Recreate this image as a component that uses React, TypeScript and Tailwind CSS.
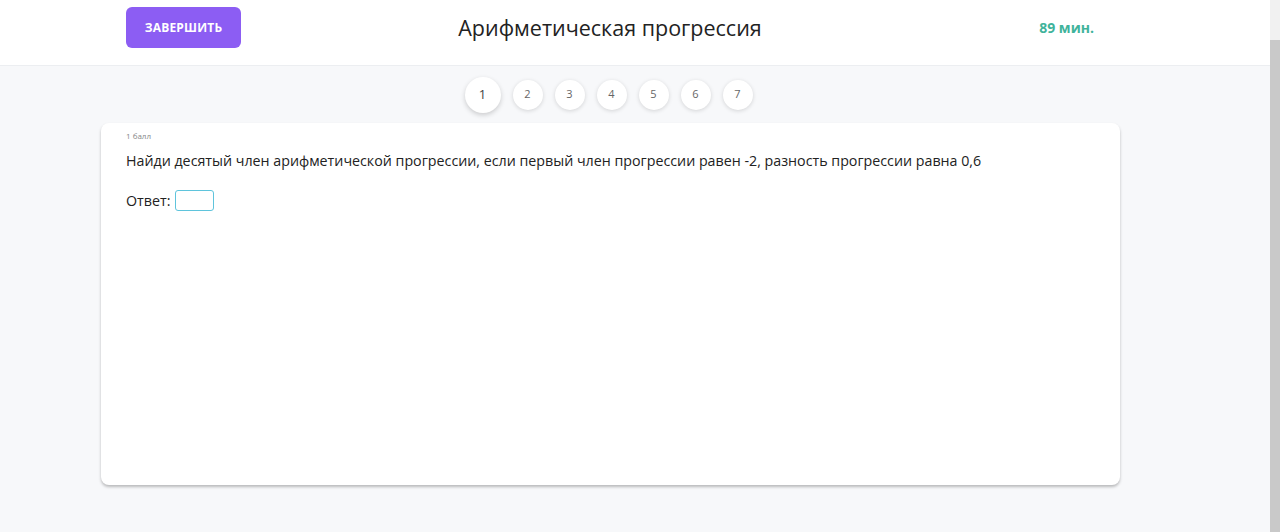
export default function App() {
  const pages = [1, 2, 3, 4, 5, 6, 7]
  return (
    <div className="flex h-[532px] w-[1280px] overflow-hidden bg-[#f7f8fa] font-['Open_Sans',sans-serif] text-[#222]">
      <div className="flex-1">
        <header className="h-[66px] border-b border-[#eceef1] bg-white">
          <div className="ml-[100px] flex w-[1020px] items-center justify-between px-[26px] pt-[7px]">
            <button className="h-[41px] w-[115px] rounded-[6px] bg-[#8c5df3] text-[12px] font-bold tracking-[0.2px] text-white">
              ЗАВЕРШИТЬ
            </button>
            <h1 className="text-[21.5px] leading-none text-[#222]">Арифметическая прогрессия</h1>
            <span className="w-[115px] text-right text-[14px] font-bold text-[#3fb39b]">89 мин.</span>
          </div>
        </header>

        <div className="ml-[101px] w-[1019px]">
          <nav className="flex h-[57px] items-center justify-center gap-[12px] pr-[4px]">
            {pages.map((p) =>
              p === 1 ? (
                <div
                  key={p}
                  className="flex h-[36px] w-[36px] items-center justify-center rounded-full bg-white text-[13px] text-[#444] shadow-[0_2px_5px_rgba(0,0,0,0.18)]"
                >
                  {p}
                </div>
              ) : (
                <div
                  key={p}
                  className="flex h-[30px] w-[30px] items-center justify-center rounded-full bg-white text-[11px] text-[#666] shadow-[0_1px_4px_rgba(0,0,0,0.15)]"
                >
                  {p}
                </div>
              )
            )}
          </nav>

          <section className="h-[362px] rounded-[8px] bg-white px-[25px] pt-[7px] shadow-[0_2px_3px_rgba(0,0,0,0.25)]">
            <div className="text-[8px] text-[#888]">1 балл</div>
            <p className="mt-[8px] text-[14.25px]">
              Найди десятый член арифметической прогрессии, если первый член прогрессии равен -2, разность прогрессии равна 0,6
            </p>
            <div className="mt-[19px] flex items-center gap-[5px] text-[14.25px]">
              <span className="-mt-[1px]">Ответ:</span>
              <input className="h-[21px] w-[39px] rounded-[3px] border border-[#5fc4dc] outline-none" />
            </div>
          </section>
        </div>
      </div>

      <div className="flex w-[10px] flex-col bg-[#f1f1f1]">
        <div className="h-[40px]" />
        <div className="flex-1 bg-[#c9c9c9]" />
      </div>
    </div>
  )
}
